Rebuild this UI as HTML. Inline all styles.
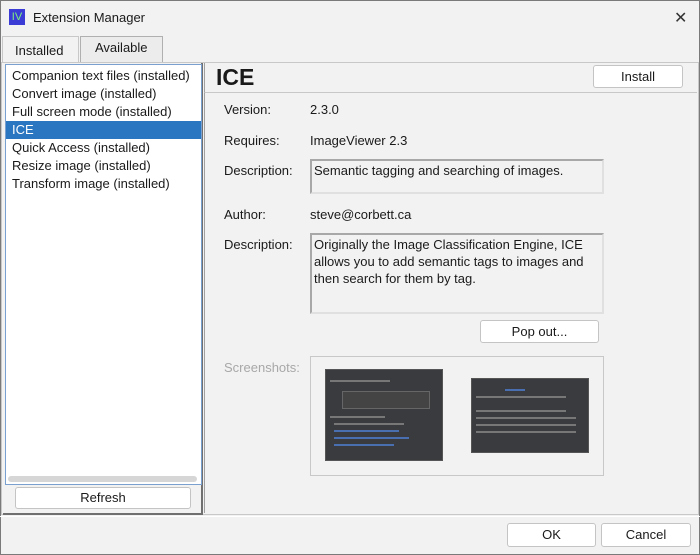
<!DOCTYPE html>
<html><head><style>
*{margin:0;padding:0;box-sizing:border-box}
body{width:700px;height:555px;background:#f2f2f2;font-family:"Liberation Sans","DejaVu Sans",sans-serif;font-size:13px;color:#1a1a1a;position:relative;overflow:hidden}
.a{position:absolute}
.btn{position:absolute;background:#fff;border:1px solid #c4c4c4;border-radius:3px;text-align:center;font-size:13px}
.lbl{position:absolute;left:224px;font-size:13px}
.box{position:absolute;border:2px solid #a8a8a8;border-right-color:#e0e0e0;border-bottom-color:#e0e0e0;background:#f2f2f2;padding:1px 2px;font-size:13px;line-height:17px}
.li{height:18px;line-height:18px;padding-left:6px}
.ln{position:absolute;height:2px;background:#777}
</style></head><body>
<div class="a" style="left:0;top:0;width:700px;height:555px;border:1px solid #7a7a7a"></div>
<div class="a" style="left:9px;top:9px;width:16px;height:16px;background:#3b3bd6;color:#7ef07e;font-size:11px;line-height:16px;text-align:center">IV</div>
<div class="a" style="left:33px;top:10px;font-size:13px">Extension Manager</div>
<div class="a" style="left:674px;top:8px;font-size:16px;color:#333">✕</div>
<div class="a" style="left:2px;top:36px;width:77px;height:27px;border:1px solid #c8c8c8;border-bottom:none;background:#f2f2f2;font-size:13px;padding:6px 0 0 12px">Installed</div>
<div class="a" style="left:80px;top:36px;width:83px;height:26px;border:1px solid #b0b0b0;border-bottom:none;background:#ececec;font-size:13px;padding:3px 0 0 14px">Available</div>
<div class="a" style="left:1px;top:62px;width:698px;height:453px;border:1px solid #c8c8c8"></div>
<div class="a" style="left:3px;top:63px;width:200px;height:452px;border-right:2px solid #707070;border-bottom:2px solid #707070"></div>
<div class="a" style="left:5px;top:64px;width:197px;height:421px;background:#fff;border:1px solid #7aa0d0;padding-top:2px">
<div class="li">Companion text files (installed)</div>
<div class="li">Convert image (installed)</div>
<div class="li">Full screen mode (installed)</div>
<div class="li" style="background:#2b76c0;color:#fff">ICE</div>
<div class="li">Quick Access (installed)</div>
<div class="li">Resize image (installed)</div>
<div class="li">Transform image (installed)</div>
<div class="a" style="left:2px;top:411px;width:189px;height:6px;background:#d6d6d6;border-radius:3px"></div>
</div>
<div class="btn" style="left:15px;top:487px;width:176px;height:22px;line-height:20px">Refresh</div>
<div class="a" style="left:204px;top:63px;width:493px;height:30px;border-bottom:1px solid #c8c8c8;border-left:1px solid #a0a0a0"></div>
<div class="a" style="left:204px;top:93px;width:1px;height:420px;background:#a0a0a0"></div>
<div class="a" style="left:216px;top:64px;font-size:23px;font-weight:bold">ICE</div>
<div class="btn" style="left:593px;top:65px;width:90px;height:23px;line-height:21px">Install</div>
<div class="lbl" style="top:102px">Version:</div><div class="a" style="left:310px;top:102px">2.3.0</div>
<div class="lbl" style="top:133px">Requires:</div><div class="a" style="left:310px;top:133px">ImageViewer 2.3</div>
<div class="lbl" style="top:163px">Description:</div>
<div class="box" style="left:310px;top:159px;width:294px;height:35px">Semantic tagging and searching of images.</div>
<div class="lbl" style="top:207px">Author:</div><div class="a" style="left:310px;top:207px">steve@corbett.ca</div>
<div class="lbl" style="top:237px">Description:</div>
<div class="box" style="left:310px;top:233px;width:294px;height:81px">Originally the Image Classification Engine, ICE allows you to add semantic tags to images and then search for them by tag.</div>
<div class="btn" style="left:480px;top:320px;width:119px;height:23px;line-height:21px">Pop out...</div>
<div class="lbl" style="top:360px;color:#a8a8a8">Screenshots:</div>
<div class="a" style="left:310px;top:356px;width:294px;height:120px;border:1px solid #c8c8c8"></div>
<div class="a" style="left:325px;top:369px;width:118px;height:92px;background:#3a3b3e;border:1px solid #555"></div>
<div class="a" style="left:342px;top:391px;width:88px;height:18px;border:1px solid #666;background:#444"></div>
<div class="ln" style="left:330px;top:380px;width:60px"></div>
<div class="ln" style="left:330px;top:416px;width:55px"></div>
<div class="ln" style="left:334px;top:423px;width:70px"></div>
<div class="ln" style="left:334px;top:430px;width:65px;background:#4a6fb0"></div>
<div class="ln" style="left:334px;top:437px;width:75px;background:#4a6fb0"></div>
<div class="ln" style="left:334px;top:444px;width:60px;background:#4a6fb0"></div>
<div class="a" style="left:471px;top:378px;width:118px;height:75px;background:#3a3b3e;border:1px solid #555"></div>
<div class="ln" style="left:505px;top:389px;width:20px;background:#4a6fb0"></div>
<div class="ln" style="left:476px;top:396px;width:90px"></div>
<div class="ln" style="left:476px;top:410px;width:90px"></div>
<div class="ln" style="left:476px;top:417px;width:100px"></div>
<div class="ln" style="left:476px;top:424px;width:100px"></div>
<div class="ln" style="left:476px;top:431px;width:100px"></div>
<div class="a" style="left:0;top:516px;width:700px;height:1px;background:#fff"></div>
<div class="btn" style="left:507px;top:523px;width:89px;height:24px;line-height:22px">OK</div>
<div class="btn" style="left:601px;top:523px;width:90px;height:24px;line-height:22px">Cancel</div>
</body></html>
